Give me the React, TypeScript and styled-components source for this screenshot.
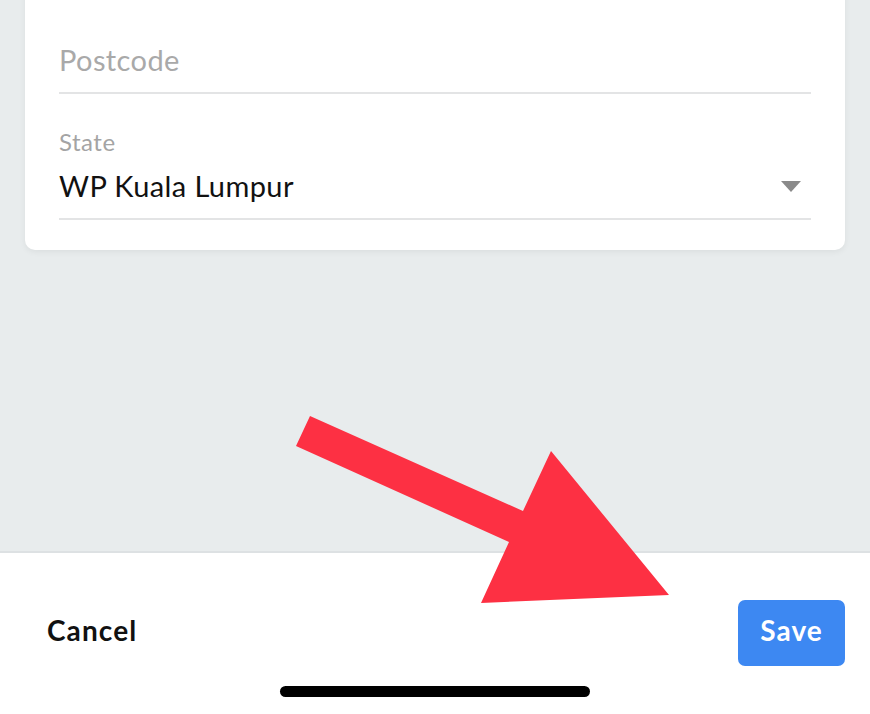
import React, { FC } from "react";
import styled, { createGlobalStyle } from "styled-components";

const GlobalStyle = createGlobalStyle`
    html, body {
        margin: 0;
        padding: 0;
        background: #e8eced;
        font-family: Lato, "Noto Sans", sans-serif;
    }
`;

const Screen = styled.div`
    position: relative;
    width: 870px;
    height: 714px;
    display: flex;
    flex-direction: column;
    overflow: hidden;
    background: #e8eced;
`;

const Content = styled.div`
    flex: 1;
    padding: 0 25px;
`;

const Card = styled.div`
    margin-top: -20px;
    background: #ffffff;
    border-radius: 10px;
    box-shadow: 0 2px 6px rgba(0, 0, 0, 0.06);
    padding: 63px 34px 30px;
`;

const Field = styled.div<{ gap?: number }>`
    display: flex;
    flex-direction: column;
    margin-top: ${(p) => p.gap ?? 0}px;
    border-bottom: 2px solid #e3e4e5;
`;

const Label = styled.div`
    font-size: 24px;
    letter-spacing: 0.5px;
    color: #a4a4a4;
    line-height: 28px;
    margin-bottom: 13px;
`;

const Value = styled.div<{ placeholder?: boolean }>`
    display: flex;
    align-items: center;
    justify-content: space-between;
    font-size: 29px;
    letter-spacing: 0.4px;
    line-height: 34px;
    color: ${(p) => (p.placeholder ? "#a9a9a9" : "#111111")};
    padding: 0 0 15px;
`;

const Caret = styled.span`
    width: 0;
    height: 0;
    margin-right: 10px;
    border-left: 10px solid transparent;
    border-right: 10px solid transparent;
    border-top: 11px solid #8a8a8a;
`;

const BottomBar = styled.div`
    height: 163px;
    box-sizing: border-box;
    background: #ffffff;
    border-top: 2px solid #dde1e3;
    display: flex;
    flex-direction: column;
    padding: 47px 25px 0 47px;
`;

const Actions = styled.div`
    display: flex;
    align-items: center;
    justify-content: space-between;
`;

const CancelButton = styled.button`
    border: none;
    background: none;
    padding: 0 0 6px;
    font-family: inherit;
    font-size: 28px;
    letter-spacing: 1.1px;
    font-weight: 700;
    color: #111111;
`;

const SaveButton = styled.button`
    width: 107px;
    height: 66px;
    border: none;
    border-radius: 7px;
    background: #3d88f2;
    color: #ffffff;
    padding: 0 0 6px;
    font-family: inherit;
    font-size: 28px;
    letter-spacing: 1px;
    font-weight: 700;
`;

const HomeIndicator = styled.div`
    align-self: center;
    width: 310px;
    height: 11px;
    border-radius: 6px;
    background: #000000;
    margin: 20px 0 0 -22px;
`;

const ArrowOverlay = styled.svg`
    position: absolute;
    left: 0;
    top: 0;
    pointer-events: none;
`;

const App: FC = () => {
    return (
        <Screen>
            <GlobalStyle />
            <Content>
                <Card>
                    <Field>
                        <Value placeholder>Postcode</Value>
                    </Field>
                    <Field gap={34}>
                        <Label>State</Label>
                        <Value>
                            WP Kuala Lumpur
                            <Caret />
                        </Value>
                    </Field>
                </Card>
            </Content>
            <BottomBar>
                <Actions>
                    <CancelButton>Cancel</CancelButton>
                    <SaveButton>Save</SaveButton>
                </Actions>
                <HomeIndicator />
            </BottomBar>
            <ArrowOverlay width={870} height={714} viewBox="0 0 870 714">
                <polygon
                    points="310,416 523,511 551,451 669,595 481,603 509,542 296,446"
                    fill="#fd3043"
                />
            </ArrowOverlay>
        </Screen>
    );
};

export default App;
